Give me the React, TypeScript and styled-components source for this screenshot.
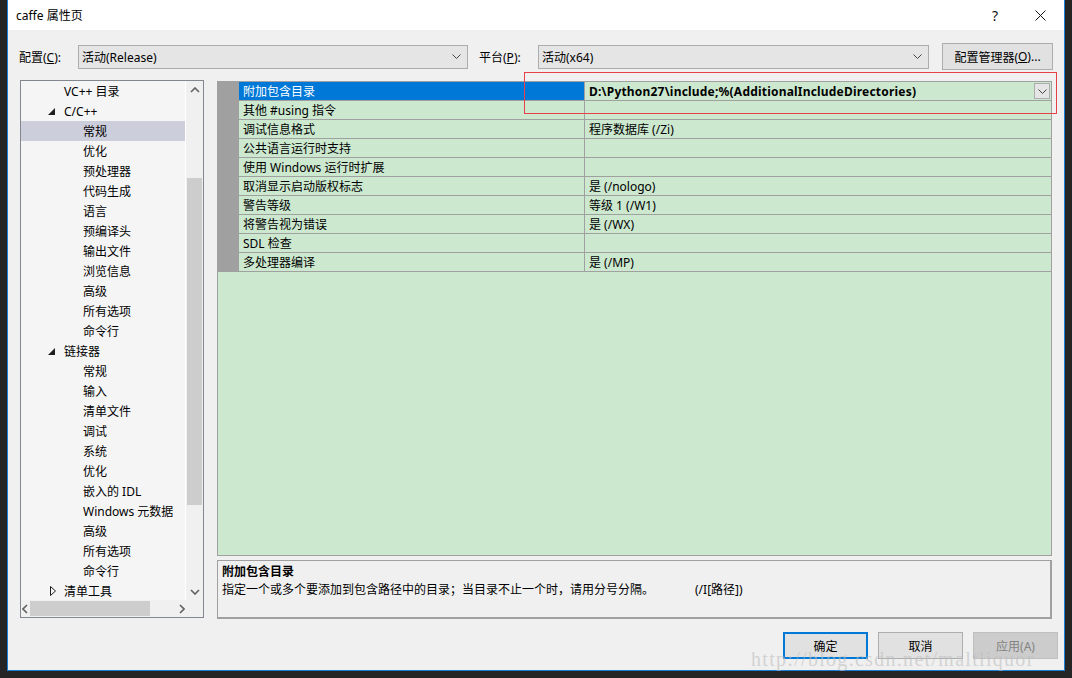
import * as React from 'react';
import styled, { createGlobalStyle } from 'styled-components';

const GlobalStyle = createGlobalStyle`
  html, body {
    margin: 0;
    padding: 0;
    background: #252526;
  }
  * {
    box-sizing: border-box;
  }
`;

const Screen = styled.div`
  position: relative;
  width: 1072px;
  height: 678px;
  overflow: hidden;
  background: #252526;
  font-family: 'Noto Sans', 'Noto Sans CJK SC', sans-serif;
  font-size: 12px;
  color: #000;
`;

const Window = styled.div`
  position: absolute;
  left: 7px;
  top: 0;
  width: 1058px;
  height: 671px;
  border: 1px solid #1a7fd4;
  border-top: none;
  background: #f0f0f0;
  display: flex;
  flex-direction: column;
`;

const TitleBar = styled.div`
  height: 30px;
  background: #fff;
  display: flex;
  align-items: center;
  padding-left: 8px;
`;

const Title = styled.span`
  flex: 1;
  font-size: 12px;
`;

const TitleButton = styled.div<{ $w: number }>`
  width: ${(p) => p.$w}px;
  height: 30px;
  display: flex;
  align-items: center;
  justify-content: center;
  font-size: 14px;
  color: #111;
`;

const Body = styled.div`
  flex: 1;
  display: flex;
  flex-direction: column;
  padding: 13px 7px 0 12px;
`;

const Toolbar = styled.div`
  display: flex;
  align-items: center;
  height: 27px;
`;

const Label = styled.span`
  width: 59px;
  margin-left: -1px;
  white-space: nowrap;
`;

const Combo = styled.div<{ $w: number; $mr: number }>`
  width: ${(p) => p.$w}px;
  margin-right: ${(p) => p.$mr}px;
  height: 24px;
  border: 1px solid #adadad;
  background: #e5e5e5;
  display: flex;
  align-items: center;
  padding: 0 6px 0 3px;
  justify-content: space-between;
`;

const ToolButton = styled.div`
  width: 111px;
  height: 27px;
  border: 1px solid #adadad;
  background: #e1e1e1;
  display: flex;
  align-items: center;
  justify-content: center;
  white-space: nowrap;
`;

const Main = styled.div`
  display: flex;
  gap: 13px;
  margin-top: 10px;
`;

const Tree = styled.div`
  width: 184px;
  height: 538px;
  border: 1px solid #828790;
  background: #f0f0f0;
  display: grid;
  grid-template-columns: 165px 17px;
  grid-template-rows: 519px 17px;
`;

const TreeList = styled.div`
  background: #f5f5f5;
  border-right: 1px solid #fff;
  overflow: hidden;
`;

const TreeRow = styled.div<{ $indent: number; $selected?: boolean }>`
  height: 20px;
  display: flex;
  align-items: center;
  padding-left: ${(p) => p.$indent}px;
  background: ${(p) => (p.$selected ? '#cccedb' : 'transparent')};
  white-space: nowrap;
  position: relative;
`;

const Expander = styled.span<{ $open: boolean }>`
  position: absolute;
  left: ${(p) => (p.$open ? 27 : 29)}px;
  top: ${(p) => (p.$open ? 7 : 5)}px;
  display: flex;
`;

const VScroll = styled.div`
  display: flex;
  flex-direction: column;
  align-items: center;
  background: #f0f0f0;
`;

const ScrollArrow = styled.div`
  width: 17px;
  height: 17px;
  display: flex;
  align-items: center;
  justify-content: center;
`;

const VTrack = styled.div`
  flex: 1;
  width: 100%;
  padding: 80px 1px 78px 1px;
  display: flex;
`;

const Thumb = styled.div<{ $size?: number }>`
  flex: ${(p) => (p.$size ? `0 0 ${p.$size}px` : '1')};
  background: #cdcdcd;
`;

const HScroll = styled.div`
  display: flex;
  align-items: center;
  background: #f0f0f0;
`;

const HTrack = styled.div`
  flex: 1;
  height: 100%;
  padding: 1px 28px 1px 0;
  display: flex;
`;

const Corner = styled.div`
  background: #f0f0f0;
`;

const RightColumn = styled.div`
  width: 835px;
  display: flex;
  flex-direction: column;
  gap: 4px;
  margin-top: 1px;
`;

const Grid = styled.div`
  height: 475px;
  border: 1px solid #a0a0a0;
  background: #cce8cf;
`;

const PropRow = styled.div`
  display: grid;
  grid-template-columns: 21px 346px 1fr;
  height: 19px;
`;

const Gutter = styled.div`
  background: #a0a0a0;
`;

const NameCell = styled.div<{ $selected?: boolean }>`
  display: flex;
  align-items: center;
  padding-left: 4px;
  border-bottom: 1px solid #a0a0a0;
  border-right: 1px solid #a0a0a0;
  background: ${(p) => (p.$selected ? '#0078d7' : 'transparent')};
  color: ${(p) => (p.$selected ? '#fff' : '#000')};
  white-space: nowrap;
`;

const ValueCell = styled.div<{ $bold?: boolean }>`
  display: flex;
  align-items: center;
  justify-content: space-between;
  padding-left: 4px;
  padding-right: 1px;
  border-bottom: 1px solid #a0a0a0;
  font-weight: ${(p) => (p.$bold ? 700 : 400)};
  letter-spacing: ${(p) => (p.$bold ? '0.2px' : 'normal')};
  white-space: nowrap;
`;

const DropButton = styled.div`
  width: 16px;
  height: 16px;
  border: 1px solid #adadad;
  background: #e5e5e5;
  display: flex;
  align-items: center;
  justify-content: center;
`;

const Description = styled.div`
  height: 59px;
  border: 1px solid #a0a0a0;
  border-bottom-width: 2px;
  border-right-width: 2px;
  background: #f0f0f0;
  padding: 2px 4px;
  line-height: 18px;
`;

const DescTitle = styled.div`
  font-weight: 700;
`;

const DescText = styled.div`
  display: flex;
`;

const DescMain = styled.span`
  width: 473px;
`;

const Footer = styled.div`
  display: flex;
  justify-content: flex-end;
  gap: 10px;
  margin-top: 13px;
  margin-right: -1px;
`;

const DialogButton = styled.div<{ $kind: 'default' | 'normal' | 'disabled' }>`
  width: 85px;
  height: 27px;
  display: flex;
  align-items: center;
  justify-content: center;
  background: ${(p) => (p.$kind === 'disabled' ? '#cccccc' : '#e1e1e1')};
  border: ${(p) =>
    p.$kind === 'default'
      ? '2px solid #0078d7'
      : p.$kind === 'disabled'
      ? '1px solid #bfbfbf'
      : '1px solid #adadad'};
  color: ${(p) => (p.$kind === 'disabled' ? '#838383' : '#000')};
`;

const Highlight = styled.div`
  position: absolute;
  left: 524px;
  top: 72px;
  width: 533px;
  height: 42px;
  border: 1px solid #e8404a;
  pointer-events: none;
`;

const Watermark = styled.div`
  position: absolute;
  left: 751px;
  top: 648px;
  font-family: 'Liberation Serif', serif;
  font-size: 20px;
  letter-spacing: 1.3px;
  color: rgba(190, 190, 190, 0.6);
  pointer-events: none;
  white-space: nowrap;
`;

const Chevron = ({ dir = 'down', color = '#606060' }: { dir?: 'down' | 'up' | 'left' | 'right'; color?: string }) => {
  const d = {
    down: 'M1 1 L5 5 L9 1',
    up: 'M1 5 L5 1 L9 5',
    left: 'M5 1 L1 5 L5 9',
    right: 'M1 1 L5 5 L1 9',
  }[dir];
  const horiz = dir === 'down' || dir === 'up';
  return (
    <svg width={horiz ? 10 : 6} height={horiz ? 6 : 10} viewBox={horiz ? '0 0 10 6' : '0 0 6 10'}>
      <path d={d} fill="none" stroke={color} strokeWidth="1.6" />
    </svg>
  );
};

const ComboArrow = () => (
  <svg width="9" height="5" viewBox="0 0 9 5">
    <path d="M0.5 0.5 L4.5 4.5 L8.5 0.5" fill="none" stroke="#444" strokeWidth="1" />
  </svg>
);

type TreeItem = { label: string; level: 0 | 1; expand?: 'open' | 'closed'; selected?: boolean };

const treeItems: TreeItem[] = [
  { label: 'VC++ 目录', level: 0 },
  { label: 'C/C++', level: 0, expand: 'open' },
  { label: '常规', level: 1, selected: true },
  { label: '优化', level: 1 },
  { label: '预处理器', level: 1 },
  { label: '代码生成', level: 1 },
  { label: '语言', level: 1 },
  { label: '预编译头', level: 1 },
  { label: '输出文件', level: 1 },
  { label: '浏览信息', level: 1 },
  { label: '高级', level: 1 },
  { label: '所有选项', level: 1 },
  { label: '命令行', level: 1 },
  { label: '链接器', level: 0, expand: 'open' },
  { label: '常规', level: 1 },
  { label: '输入', level: 1 },
  { label: '清单文件', level: 1 },
  { label: '调试', level: 1 },
  { label: '系统', level: 1 },
  { label: '优化', level: 1 },
  { label: '嵌入的 IDL', level: 1 },
  { label: 'Windows 元数据', level: 1 },
  { label: '高级', level: 1 },
  { label: '所有选项', level: 1 },
  { label: '命令行', level: 1 },
  { label: '清单工具', level: 0, expand: 'closed' },
];

const props: { name: string; value: string }[] = [
  { name: '附加包含目录', value: 'D:\\Python27\\include;%(AdditionalIncludeDirectories)' },
  { name: '其他 #using 指令', value: '' },
  { name: '调试信息格式', value: '程序数据库 (/Zi)' },
  { name: '公共语言运行时支持', value: '' },
  { name: '使用 Windows 运行时扩展', value: '' },
  { name: '取消显示启动版权标志', value: '是 (/nologo)' },
  { name: '警告等级', value: '等级 1 (/W1)' },
  { name: '将警告视为错误', value: '是 (/WX)' },
  { name: 'SDL 检查', value: '' },
  { name: '多处理器编译', value: '是 (/MP)' },
];

const App = () => {
  return (
    <Screen>
      <GlobalStyle />
      <Window>
        <TitleBar>
          <Title>caffe 属性页</Title>
          <TitleButton $w={42}>?</TitleButton>
          <TitleButton $w={48}>
            <svg width="11" height="11" viewBox="0 0 11 11">
              <path d="M0.5 0.5 L10.5 10.5 M10.5 0.5 L0.5 10.5" stroke="#111" strokeWidth="1" />
            </svg>
          </TitleButton>
        </TitleBar>
        <Body>
          <Toolbar>
            <Label>
              配置(<u>C</u>):
            </Label>
            <Combo $w={390} $mr={12}>
              <span>活动(Release)</span>
              <ComboArrow />
            </Combo>
            <Label>
              平台(<u>P</u>):
            </Label>
            <Combo $w={391} $mr={13}>
              <span>活动(x64)</span>
              <ComboArrow />
            </Combo>
            <ToolButton>
              配置管理器(<u>O</u>)...
            </ToolButton>
          </Toolbar>
          <Main>
            <Tree>
              <TreeList>
                {treeItems.map((item, i) => (
                  <TreeRow key={i} $indent={item.level === 0 ? 43 : 62} $selected={item.selected}>
                    {item.expand === 'open' && (
                      <Expander $open>
                        <svg width="7" height="7" viewBox="0 0 7 7">
                          <path d="M7 0 L7 7 L0 7 Z" fill="#1e1e1e" />
                        </svg>
                      </Expander>
                    )}
                    {item.expand === 'closed' && (
                      <Expander $open={false}>
                        <svg width="6" height="10" viewBox="0 0 6 10">
                          <path d="M0.5 0.5 L5.5 5 L0.5 9.5 Z" fill="none" stroke="#1e1e1e" strokeWidth="1" />
                        </svg>
                      </Expander>
                    )}
                    {item.label}
                  </TreeRow>
                ))}
              </TreeList>
              <VScroll>
                <ScrollArrow>
                  <Chevron dir="up" />
                </ScrollArrow>
                <VTrack>
                  <Thumb />
                </VTrack>
                <ScrollArrow>
                  <Chevron dir="down" />
                </ScrollArrow>
              </VScroll>
              <HScroll>
                <ScrollArrow>
                  <Chevron dir="left" />
                </ScrollArrow>
                <HTrack>
                  <Thumb $size={120} />
                </HTrack>
                <ScrollArrow>
                  <Chevron dir="right" />
                </ScrollArrow>
              </HScroll>
              <Corner />
            </Tree>
            <RightColumn>
              <Grid>
                {props.map((p, i) => (
                  <PropRow key={i}>
                    <Gutter />
                    <NameCell $selected={i === 0}>{p.name}</NameCell>
                    <ValueCell $bold={i === 0}>
                      <span>{p.value}</span>
                      {i === 0 && (
                        <DropButton>
                          <ComboArrow />
                        </DropButton>
                      )}
                    </ValueCell>
                  </PropRow>
                ))}
              </Grid>
              <Description>
                <DescTitle>附加包含目录</DescTitle>
                <DescText>
                  <DescMain>指定一个或多个要添加到包含路径中的目录；当目录不止一个时，请用分号分隔。</DescMain>
                  <span>(/I[路径])</span>
                </DescText>
              </Description>
            </RightColumn>
          </Main>
          <Footer>
            <DialogButton $kind="default">确定</DialogButton>
            <DialogButton $kind="normal">取消</DialogButton>
            <DialogButton $kind="disabled">应用(A)</DialogButton>
          </Footer>
        </Body>
      </Window>
      <Highlight />
      <Watermark>http://blog.csdn.net/maltliquor</Watermark>
    </Screen>
  );
};

export default App;
